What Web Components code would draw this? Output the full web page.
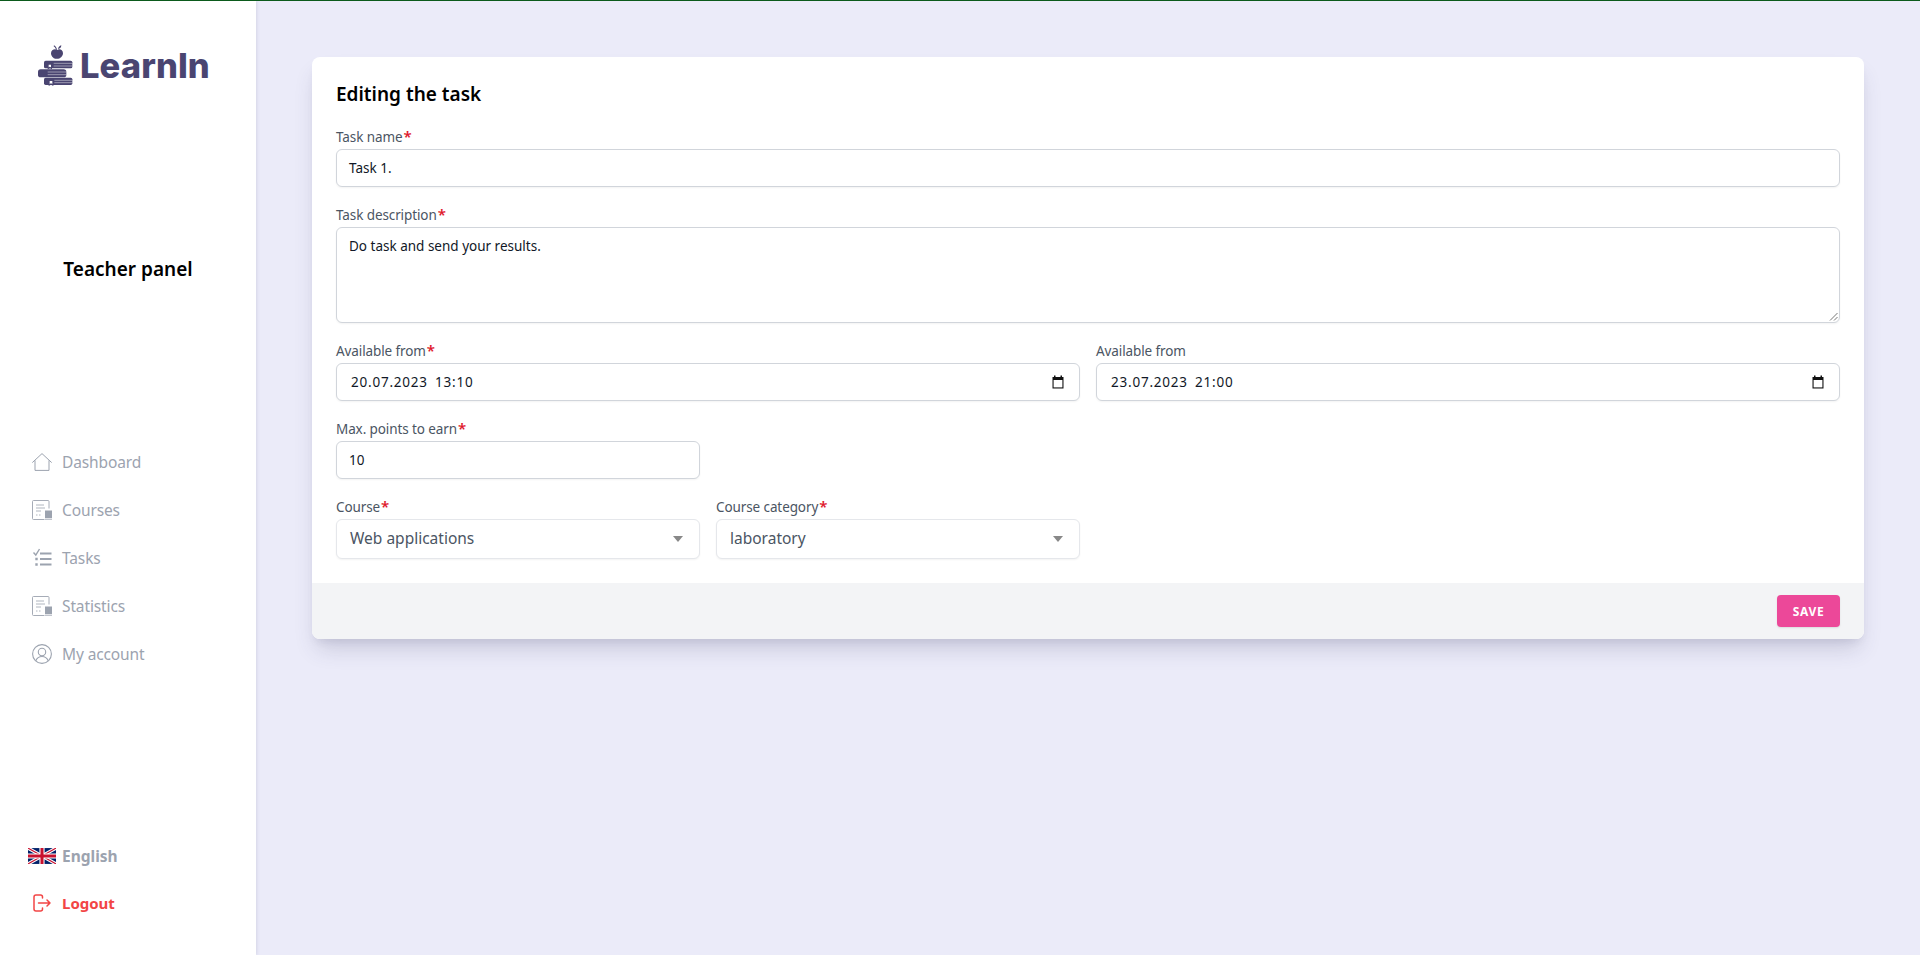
<!DOCTYPE html>
<html lang="en"><head><meta charset="utf-8"><title>Editing the task</title>
<style>
html,body{margin:0;height:100%}
body{height:955px;overflow:hidden;box-sizing:border-box;border-top:1px solid #0b5a1c;background:#ebebf9;font-family:"Noto Sans","Open Sans",sans-serif;display:flex}
</style></head><body>
<app-sidebar>
  <brand-logo></brand-logo>
  <panel-title>Teacher panel</panel-title>
  <nav-item icon="home">Dashboard</nav-item>
  <nav-item icon="doc">Courses</nav-item>
  <nav-item icon="tasks">Tasks</nav-item>
  <nav-item icon="doc">Statistics</nav-item>
  <nav-item icon="user">My account</nav-item>
  <nav-item slot="bottom" icon="flag" bold>English</nav-item>
  <nav-item slot="bottom" icon="logout" bold danger>Logout</nav-item>
</app-sidebar>
<page-main>
  <task-card heading="Editing the task">
    <form-grid>
      <form-field label="Task name" required span="4"><text-box>Task 1.</text-box></form-field>
      <form-field label="Task description" required span="4"><text-box multiline>Do task and send your results.</text-box></form-field>
      <form-field label="Available from" required span="2"><text-box date>20.07.2023 13:10</text-box></form-field>
      <form-field label="Available from" span="2"><text-box date>23.07.2023 21:00</text-box></form-field>
      <form-field label="Max. points to earn" required span="1"><text-box>10</text-box></form-field>
      <form-field label="Course" required span="1" newrow><select-box>Web applications</select-box></form-field>
      <form-field label="Course category" required span="1"><select-box>laboratory</select-box></form-field>
    </form-grid>
    <app-button slot="footer">Save</app-button>
  </task-card>
</page-main>
<script>
const NS={
 home:`<svg width="20" height="20" viewBox="0 0 20 20" fill="none" stroke="#9ca3af" stroke-width="1"><path d="M.3 10.6 10 1.6l9.7 9"/><path d="M3 8.4V18.4H17V8.4"/></svg>`,
 doc:`<svg width="20" height="20" viewBox="0 0 20 20" fill="none" stroke="#9ca3af"><path d="M17 8.500V1.500a1 1 0 0 0-1-1H1.500a1 1 0 0 0-1 1v17a1 1 0 0 0 1 1H12.500" stroke-width=".9"/><path d="M4 5h8M4 8h9M4 11h5M4 15h1.500M7 15h1.500" stroke-width=".8"/><path d="M13 10.500h7v7.500h-7z" fill="#9ca3af" stroke="none"/><path d="M13 19.200h7" stroke-width=".9"/></svg>`,
 tasks:`<svg width="20" height="20" viewBox="0 0 20 20" fill="none" stroke="#9ca3af"><path d="M1.500 4.500 3.800 7 7.500 1" stroke-width="1.400"/><path d="M8 5.500h11.500M8 11h11.500M8 16.500h11.500" stroke-width="2.200"/><path d="M3.300 9.800h2.400v2.400h-2.400zM3.300 15.300h2.400v2.400h-2.400z" fill="#9ca3af" stroke="none"/></svg>`,
 user:`<svg width="20" height="20" viewBox="0 0 20 20" fill="none" stroke="#9ca3af" stroke-width="1.100"><circle cx="10" cy="10" r="9.400"/><circle cx="10" cy="8" r="3.700"/><path d="M3.800 16.800C5 13.800 7 12.500 10 12.500s5 1.300 6.200 4.300"/></svg>`,
 logout:`<svg width="20" height="20" viewBox="0 0 20 20" fill="none" stroke="#f24545" stroke-width="1.500" stroke-linecap="round" stroke-linejoin="round"><path d="M10.500 5V4a2 2 0 0 0-2-2H4a2 2 0 0 0-2 2v12a2 2 0 0 0 2 2h4.500a2 2 0 0 0 2-2v-1"/><path d="M6.500 10H18M15 7l3 3-3 3"/></svg>`,
 flag:`<svg width="28" height="16" viewBox="0 0 60 34" style="display:block"><path fill="#012169" d="M0 0h60v34H0z"/><path d="M0 0l60 34M60 0 0 34" stroke="#fff" stroke-width="7"/><path d="M0 0l60 34M60 0 0 34" stroke="#c8102e" stroke-width="2.500"/><path d="M30 0v34M0 17h60" stroke="#fff" stroke-width="11"/><path d="M30 0v34M0 17h60" stroke="#c8102e" stroke-width="6.500"/></svg>`
};
function comp(name,css,html){
 customElements.define(name,class extends HTMLElement{
  connectedCallback(){ if(this.shadowRoot) return;
   const r=this.attachShadow({mode:"open"});
   r.innerHTML=`<style>${css}</style>`+(typeof html==="function"?html(this):html);
  }
 });
}
comp("app-sidebar",`:host{display:flex;flex-direction:column;width:256px;height:954px;flex:none;background:#fff;box-shadow:1px 0 3px rgba(90,90,130,.15);position:relative;z-index:1;padding-bottom:27px;box-sizing:border-box}
 .bottom{margin-top:auto;display:flex;flex-direction:column;gap:0}`,
 `<slot></slot><div class="bottom"><slot name="bottom"></slot></div>`);
comp("brand-logo",`:host{display:flex;align-items:center;height:42px;margin:44px 0 0 38px;gap:7px;color:#4a4571;font:800 34.500px/42px Inter,"Noto Sans",sans-serif;letter-spacing:.1px}
 svg{display:block;flex:none}`,
 `<svg width="35" height="42" viewBox="113 135 105 126"><g fill="#4a4571"><path d="M171 150c-5-4-19-3-19 10 0 8 8 17 14 16h7c6 1 15-8 15-16 0-13-13-14-17-10z"/><path d="M170 149c-1-6-4-10-9-13l-1 3c4 3 6 6 7 10zM173 147c1-5 4-9 10-11 0 6-3 10-10 11z"/><rect x="131" y="182" width="85" height="23" rx="5"/><rect x="113" y="208" width="85" height="24" rx="8"/><rect x="131" y="233" width="85" height="22" rx="5"/><path d="M145 240h14v18l-7-4-7 4zM142 192h13v16l-6-3-7 3z"/></g><path d="M160 190h56M160 198h56M142 216h56M142 224h56M162 241h54M162 248h54" stroke="#fff" stroke-width="1.800" opacity=".75"/><path d="M145 194h7v8l-3.500-2-3.500 2zM148 243h8v9l-4-2-4 2z" fill="#fff"/></svg><span>LearnIn</span>`);
comp("panel-title",`:host{display:block;margin:168px 0 155px;text-align:center;font-size:19px;line-height:28px;font-weight:600;color:#000}`,`<slot></slot>`);
comp("nav-item",`:host{display:flex;align-items:center;height:48px;font-size:15.500px;letter-spacing:-.12px;color:#9ca3af;box-sizing:border-box;padding-left:32px;position:relative}
 :host([bold]){font-weight:700;font-size:15.500px;letter-spacing:0}
 :host([danger]){color:#f24545;font-size:15px;top:-1px}
 .i{width:20px;height:20px;display:flex;align-items:center;justify-content:center;margin-right:10px;flex:none}
 :host([icon=flag]) .i{margin-left:-4px;width:28px;margin-right:6px}`,
 el=>`<span class="i">${NS[el.getAttribute("icon")]}</span><span class="t"><slot></slot></span>`);
comp("page-main",`:host{display:block;flex:1;min-width:0;padding:56px}`,`<slot></slot>`);
comp("task-card",`:host{display:block;background:#fff;border-radius:8px;box-shadow:0 14px 22px -5px rgba(60,60,100,.2),0 6px 8px -4px rgba(60,60,100,.1);overflow:hidden}
 .body{padding:24px}
 h2{margin:-1px 0 17px;font-size:19px;line-height:28px;font-weight:600;color:#000}
 .foot{height:56px;background:#f3f4f6;display:flex;align-items:center;justify-content:flex-end;padding:0 24px}`,
 el=>`<div class="body"><h2>${el.getAttribute("heading")}</h2><slot></slot></div><div class="foot"><slot name="footer"></slot></div>`);
comp("form-grid",`:host{display:grid;grid-template-columns:repeat(4,1fr);gap:16px}`,`<slot></slot>`);
comp("form-field",`:host{display:block;min-width:0}
 :host([span="4"]){grid-column:span 4}:host([span="2"]){grid-column:span 2}:host([span="1"]){grid-column:span 1}
 :host([newrow]){grid-column:1 / span 1}
 label{display:block;height:20px;margin-bottom:4px;font-size:13.500px;letter-spacing:-.1px;line-height:24px;color:#4b5563;white-space:nowrap}
 b{color:#e0192d;font-weight:600;font-size:15px;line-height:1;margin-left:1px}`,
 el=>`<label>${el.getAttribute("label")}${el.hasAttribute("required")?"<b>*</b>":""}</label><slot></slot>`);
comp("text-box",`:host{display:flex;align-items:center;justify-content:space-between;height:38px;box-sizing:border-box;border:1px solid #d1d5db;border-radius:6px;background:#fff;padding:0 12px;font-size:13.500px;line-height:20px;color:#111827;box-shadow:0 1px 2px rgba(0,0,0,.05);position:relative}
 :host([multiline]){height:96px;align-items:flex-start;padding-top:8px}
 :host([date]){padding:0 13px 0 14px;letter-spacing:.78px;word-spacing:3px}
 .g{position:absolute;right:1px;bottom:1px;display:block}
 svg{display:block;flex:none}`,
 el=>`<span><slot></slot></span>`+(el.hasAttribute("date")?`<svg width="16" height="16" viewBox="0 0 16 16"><path d="M4 1.500h1.500V3h5V1.500H12V3h1.500v11.500h-11V3H4z" fill="#111"/><path d="M3.600 6h8.800v7.400H3.600z" fill="#fff"/></svg>`:"")+(el.hasAttribute("multiline")?`<svg class="g" width="9" height="9" viewBox="0 0 9 9" stroke="#777" stroke-width="1"><path d="M8.500 1 1 8.500M8.500 5 5 8.500"/></svg>`:""));
comp("select-box",`:host{display:flex;align-items:center;justify-content:space-between;height:40px;box-sizing:border-box;border:1px solid #e5e7eb;border-radius:6px;background:#fff;padding:0 15px 0 13px;font-size:15.500px;color:#4b5563;box-shadow:0 1px 2px rgba(0,0,0,.05)}
 span{position:relative;top:-1px}
 i{display:block;width:0;height:0;border-left:5px solid transparent;border-right:5px solid transparent;border-top:6px solid #888;margin-right:1px}`,`<span><slot></slot></span><i></i>`);
comp("app-button",`:host{display:flex;align-items:center;justify-content:center;width:63px;height:32px;border-radius:4px;background:#ec4899;color:#fff;font-size:12px;letter-spacing:.65px;font-weight:700;text-transform:uppercase;box-shadow:0 1px 2px rgba(0,0,0,.1)}`,`<slot></slot>`);
</script>
</body></html>
